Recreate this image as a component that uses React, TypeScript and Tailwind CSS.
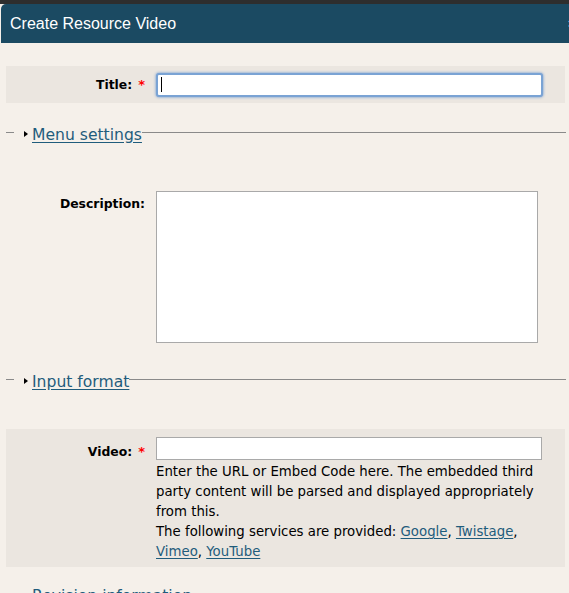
import React from "react"

const linkCls = "text-[#1f5c7c] underline underline-offset-2"

function Collapsed({ label }: { label: string }) {
  return (
    <div className="flex items-center">
      <div className="h-px w-[8px] bg-[#8a8a8a]" />
      <span className="ml-[10px] mr-[4px] mt-[3px] inline-block h-0 w-0 border-y-[3px] border-l-[4px] border-y-transparent border-l-black" />
      <a href="#" className={`${linkCls} pt-[6px] text-[15.6px] leading-none`}>
        {label}
      </a>
      <div className="h-px flex-1 bg-[#8a8a8a]" />
    </div>
  )
}

function Label({ text, required }: { text: string; required?: boolean }) {
  return (
    <div className="w-[139px] shrink-0 text-right font-bold text-[12.4px] text-black">
      {text}
      {required && <span className="ml-[6px] text-[13px] text-[#ff0000]">*</span>}
    </div>
  )
}

export default function App() {
  return (
    <div className="min-h-screen bg-[#f5f0ea] font-['DejaVu_Sans',sans-serif] text-[13px] text-black">
      <div className="h-[4px] bg-[#2e2e2e]" />
      <div className="ml-px flex h-[39px] items-center justify-between rounded-tl-[5px] bg-[#1b4a62] pl-[9px] font-['Liberation_Sans',sans-serif] text-[16px] text-white">
        <span>Create Resource Video</span>
        <span className="-mr-[6px] text-[12px] font-bold">×</span>
      </div>

      <div className="pl-[6px] pr-[3px]">
        <div className="mt-[23px] mr-[1px] flex h-[37px] items-center bg-[#ebe6e0]">
          <Label text="Title:" required />
          <div className="ml-[11px] flex h-[24px] w-[387px] items-center rounded-[3px] border-2 border-[#7aa3d4] bg-white pl-[3px] shadow-[0_0_3px_#5b8fd0]">
            <span className="h-[15px] w-px bg-black" />
          </div>
        </div>

        <div className="mt-[19px]">
          <Collapsed label="Menu settings" />
        </div>

        <div className="mt-[47px] flex items-start">
          <div className="pt-[4px]">
            <Label text="Description:" />
          </div>
          <textarea className="ml-[11px] h-[152px] w-[382px] resize-none border border-[#a9a9a9] bg-white" />
        </div>

        <div className="mt-[26px]">
          <Collapsed label="Input format" />
        </div>

        <div className="mt-[39px] mr-[1px] flex items-start bg-[#ebe6e0] pt-[8px] pb-[5px]">
          <div className="pt-[5px]">
            <Label text="Video:" required />
          </div>
          <div className="ml-[11px] w-[387px]">
            <input className="block h-[23px] w-[386px] border border-[#a9a9a9] bg-white" />
            <div className="mt-[2px] text-[13.3px] leading-[20px]">
              Enter the URL or Embed Code here. The embedded third party content will be parsed and displayed appropriately from this.
              <br />
              The following services are provided: <a href="#" className={linkCls}>Google</a>,{" "}
              <a href="#" className={linkCls}>Twistage</a>, <a href="#" className={linkCls}>Vimeo</a>,{" "}
              <a href="#" className={linkCls}>YouTube</a>
            </div>
          </div>
        </div>

        <div className="mt-[22px] flex items-center">
          <span className="ml-[18px] mr-[4px] inline-block h-0 w-0 border-y-[3px] border-l-[4px] border-y-transparent border-l-black" />
          <a href="#" className={`${linkCls} text-[15.6px] leading-none`}>
            Revision information
          </a>
        </div>
      </div>
    </div>
  )
}
